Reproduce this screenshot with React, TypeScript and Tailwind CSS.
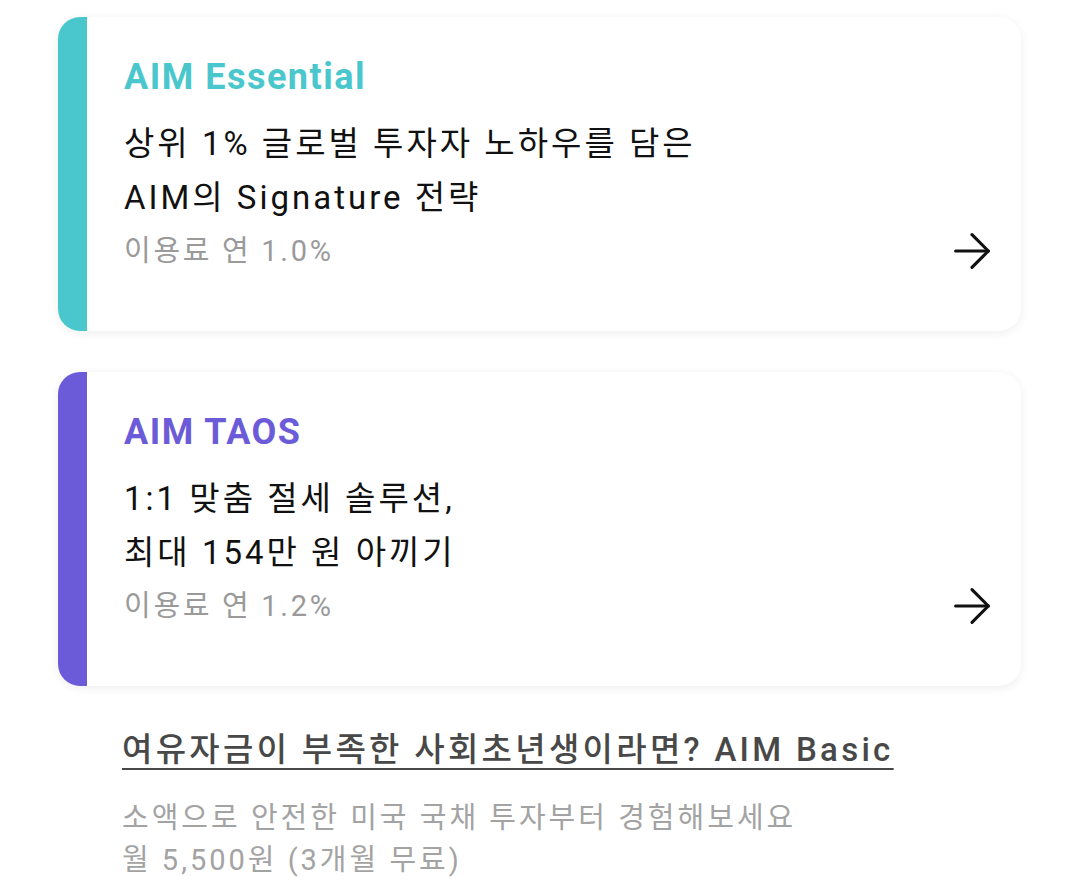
import { ArrowRight } from 'lucide-react';

const font = { fontFamily: 'Roboto, "Noto Sans CJK KR", sans-serif' };

const plans = [
  {
    name: 'AIM Essential',
    accent: 'bg-[#4ac7cd]',
    text: 'text-[#4ac7cd]',
    lines: ['상위 1% 글로벌 투자자 노하우를 담은', 'AIM의 Signature 전략'],
    fee: '이용료 연 1.0%',
  },
  {
    name: 'AIM TAOS',
    accent: 'bg-[#6c5bd9]',
    text: 'text-[#6c5bd9]',
    lines: ['1:1 맞춤 절세 솔루션,', '최대 154만 원 아끼기'],
    fee: '이용료 연 1.2%',
  },
];

function PlanCard({ plan }: { plan: (typeof plans)[number] }) {
  return (
    <div className="flex h-[314px] overflow-hidden rounded-[22px] bg-white shadow-[0_2px_10px_rgba(0,0,0,0.07)]">
      <div className={`w-[29px] shrink-0 ${plan.accent}`} />
      <div className="flex flex-1 items-end pl-[37px] pr-[21px] pt-[37px]">
        <div className="flex-1 self-start">
          <h2 className={`text-[36px] font-bold leading-[46px] tracking-[1.5px] ${plan.text}`}>{plan.name}</h2>
          <p className="mt-[17px] text-[33px] leading-[54px] tracking-[3px] text-[#111]">
            {plan.lines[0]}
            <br />
            {plan.lines[1]}
          </p>
          <p className="text-[29px] leading-[52px] tracking-[2.7px] text-[#9a9a9a]">{plan.fee}</p>
        </div>
        <ArrowRight className="mb-[52px] h-[56px] w-[56px] shrink-0 text-[#111]" strokeWidth={1.35} />
      </div>
    </div>
  );
}

export default function App() {
  return (
    <div className="min-h-[888px] bg-white px-[58px] pt-[17px]" style={font}>
      <div className="flex w-[963px] flex-col gap-[41px]">
        {plans.map((p) => (
          <PlanCard key={p.name} plan={p} />
        ))}
      </div>
      <div className="pl-[64px] pt-[42px]">
        <a className="text-[33px] font-medium leading-[44px] tracking-[3.3px] text-[#484848] underline decoration-[2px] underline-offset-[7px]">
          여유자금이 부족한 사회초년생이라면? AIM Basic
        </a>
        <p className="mt-[25px] text-[29px] leading-[42px] tracking-[3px] text-[#a3a3a3]">
          소액으로 안전한 미국 국채 투자부터 경험해보세요
          <br />
          월 5,500원 (3개월 무료)
        </p>
      </div>
    </div>
  );
}
